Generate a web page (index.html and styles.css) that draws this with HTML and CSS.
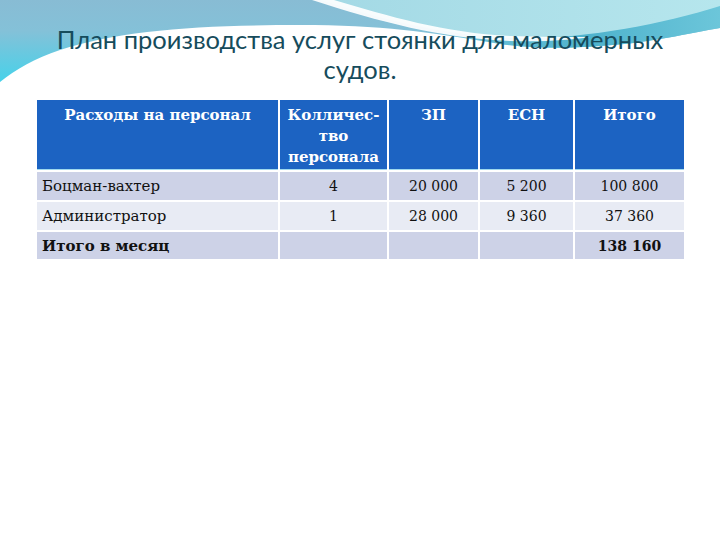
FILE: index.html
```html
<!DOCTYPE html>
<html lang="ru">
<head>
<meta charset="utf-8">
<title>План производства услуг стоянки</title>
<link rel="stylesheet" href="styles.css">
</head>
<body>
<svg class="bg" width="720" height="540" viewBox="0 0 720 540" aria-hidden="true">
  <defs>
    <linearGradient id="gTop" x1="0" y1="0" x2="0" y2="88" gradientUnits="userSpaceOnUse">
      <stop offset="0" stop-color="#88bcd4"/>
      <stop offset="0.35" stop-color="#84c1d8"/>
      <stop offset="1" stop-color="#3fd4ec"/>
    </linearGradient>
    <linearGradient id="gTeal" x1="0" y1="0" x2="720" y2="0" gradientUnits="userSpaceOnUse">
      <stop offset="0.6" stop-color="#4fb3cd" stop-opacity="0"/>
      <stop offset="0.82" stop-color="#4fb3cd" stop-opacity="1"/>
      <stop offset="1" stop-color="#6cc6da" stop-opacity="1"/>
    </linearGradient>
    <linearGradient id="gCyan" x1="320" y1="0" x2="720" y2="0" gradientUnits="userSpaceOnUse">
      <stop offset="0" stop-color="#a3d9e5"/>
      <stop offset="1" stop-color="#b6e6ed"/>
    </linearGradient>
  </defs>
  <rect width="720" height="540" fill="#ffffff"/>
  <path d="M0,0 H720 V28 C690,33 650,43 600,46 C560,49 530,48 500,44 C430,32 380,25 300,25 C200,25 120,30 60,50 C35,58 15,70 0,82 Z" fill="url(#gTop)"/>
  <path d="M0,0 H720 V28 C690,33 650,43 600,46 C560,49 530,48 500,44 C430,32 380,25 300,25 C200,25 120,30 60,50 C35,58 15,70 0,82 Z" fill="url(#gTeal)"/>
  <path d="M320,0 H720 V6 C660,25 580,40 510,38 C440,35 380,18 320,0 Z" fill="url(#gCyan)"/>
  <path d="M312,0 C380,22 440,38 510,41 C545,42 570,40 590,37 C565,37 540,37 510,36 C445,33 388,16 334,0 Z" fill="#ffffff" opacity="0.92"/>
</svg>
<main class="slide">
  <h1 class="title">План производства услуг стоянки для маломерных судов.</h1>
  <table class="staff">
    <colgroup>
      <col class="c-name">
      <col class="c-count">
      <col class="c-pay">
      <col class="c-tax">
      <col class="c-total">
    </colgroup>
    <thead>
      <tr>
        <th>Расходы на персонал</th>
        <th>Колличес-<br>тво<br>персонала</th>
        <th>ЗП</th>
        <th>ЕСН</th>
        <th>Итого</th>
      </tr>
    </thead>
    <tbody>
      <tr class="odd">
        <td class="name">Боцман-вахтер</td>
        <td class="num">4</td>
        <td class="num">20 000</td>
        <td class="num">5 200</td>
        <td class="num">100 800</td>
      </tr>
      <tr class="even">
        <td class="name">Администратор</td>
        <td class="num">1</td>
        <td class="num">28 000</td>
        <td class="num">9 360</td>
        <td class="num">37 360</td>
      </tr>
      <tr class="odd last">
        <td class="name strong">Итого в месяц</td>
        <td></td>
        <td></td>
        <td></td>
        <td class="num strong">138 160</td>
      </tr>
    </tbody>
  </table>
</main>
</body>
</html>
```
FILE: styles.css
```css
html, body {
  margin: 0;
  padding: 0;
}
body {
  width: 720px;
  height: 540px;
  background: #ffffff;
  position: relative;
  overflow: hidden;
}
.bg {
  position: absolute;
  left: 0;
  top: 0;
  z-index: 0;
}
.slide {
  position: relative;
  z-index: 1;
  padding-top: 24px;
}
.title {
  margin: 0 auto;
  width: 640px;
  font-family: Lato, "Open Sans", sans-serif;
  font-weight: 400;
  font-size: 25.5px;
  line-height: 30px;
  color: #164c5c;
  text-align: center;
}
.staff {
  margin: 14px 0 0 35px;
  width: 651px;
  table-layout: fixed;
  border-collapse: separate;
  border-spacing: 2px;
  font-family: "DejaVu Serif", "Liberation Serif", serif;
  font-size: 15px;
  color: #111111;
}
.c-name { width: 241px; }
.c-count { width: 107px; }
.c-pay { width: 89px; }
.c-tax { width: 93px; }
.c-total { width: 109px; }
.staff thead tr {
  height: 70px;
}
.staff th {
  background: #1c63c2;
  color: #ffffff;
  font-weight: 700;
  line-height: 21px;
  padding: 5px 0 0;
  vertical-align: top;
  text-align: center;
  box-shadow: inset 0 -1px 0 #9fd9ee;
}
.staff tbody tr {
  height: 28px;
}
.staff tbody tr.last {
  height: 27px;
}
.staff td {
  padding: 0;
  line-height: 20px;
  vertical-align: middle;
  text-align: center;
}
.staff td.num {
  font-size: 14px;
}
.staff td.name {
  text-align: left;
  padding-left: 5px;
}
.staff .odd td {
  background: #cdd2e7;
}
.staff .even td {
  background: #e8ebf4;
}
.staff .strong {
  font-weight: 700;
}
```
